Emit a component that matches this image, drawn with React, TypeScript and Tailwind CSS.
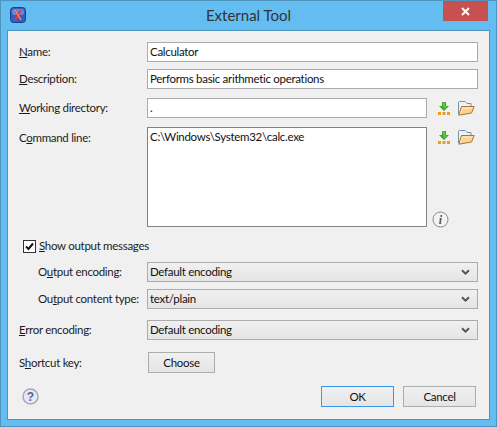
import { ReactNode } from "react";

const font = { fontFamily: 'Lato, "Noto Sans", sans-serif' };

const Label = ({ children, className = "w-[128px]" }: { children: ReactNode; className?: string }) => (
  <div className={`${className} shrink-0 whitespace-nowrap text-[11.5px] leading-[16px] tracking-[-0.3px] text-[#1c1c1c]`}>{children}</div>
);

const Field = ({ value, className = "" }: { value: string; className?: string }) => (
  <div className={`h-[20px] border border-[#ababab] bg-white pl-[2px] text-[11.5px] leading-[18px] tracking-[-0.3px] text-[#111] ${className}`}>
    {value}
  </div>
);

const Chevron = () => (
  <svg width="9" height="7" viewBox="0 0 9 7">
    <path d="M1 1.2 L4.5 4.7 L8 1.2" fill="none" stroke="#555" strokeWidth="2" />
  </svg>
);

const Select = ({ value }: { value: string }) => (
  <div className="flex h-[20px] flex-1 items-center justify-between border border-[#acacac] bg-gradient-to-b from-[#f0f0f0] to-[#e5e5e5] pl-[2px] pr-[7px] text-[11.5px] tracking-[-0.3px] text-[#111]">
    <span>{value}</span>
    <Chevron />
  </div>
);

const Download = () => (
  <svg width="12" height="13" viewBox="0 0 12 13" className="shrink-0">
    <path d="M4 0 H8 V4 H11 L6 9 L1 4 H4 Z" fill="#3fa52c" />
    <path d="M4.5 0.5 H7 V4.5 H9 L6 7 Z" fill="#63c94a" />
    <rect x="0" y="10" width="3" height="3" fill="#f09a1a" />
    <rect x="4.5" y="10" width="3" height="3" fill="#f09a1a" />
    <rect x="9" y="10" width="3" height="3" fill="#f09a1a" />
  </svg>
);

const Folder = () => (
  <svg width="17" height="15" viewBox="0 0 17 15" className="shrink-0">
    <path d="M0.5 13 V1.5 Q0.5 0.5 1.5 0.5 H7 L9 2.5 H13 V5" fill="#eef2f6" stroke="#7d8fa3" />
    <path d="M0.8 14.2 L3.5 5.5 H16.2 L13.5 12 Z" fill="#f8d48e" stroke="#a8743c" />
    <path d="M2.5 13 L4.5 7 H14.5" fill="none" stroke="#fdeecb" />
  </svg>
);

const Button = ({ children, className = "" }: { children: ReactNode; className?: string }) => (
  <div className={`flex items-center justify-center border bg-gradient-to-b from-[#f0f0f0] to-[#e5e5e5] text-[11.5px] tracking-[-0.3px] text-[#111] ${className}`}>
    {children}
  </div>
);

export default function App() {
  return (
    <div style={font} className="flex h-[427px] w-[497px] flex-col overflow-hidden border border-[#4e94bd] bg-[#63bdf0]">
      {/* Title bar */}
      <div className="relative flex h-[29px] shrink-0 items-center justify-center">
        <svg width="16" height="16" viewBox="0 0 16 16" className="absolute left-[9px] top-[6px]">
          <rect x="0.5" y="0.5" width="15" height="15" rx="3" fill="#2f5fc4" stroke="#1c3f8f" />
          <rect x="2" y="2" width="12" height="6" rx="2" fill="#5f8be0" />
          <path d="M5 3 L11 13 M11 3 L5 13" stroke="#f03a2a" strokeWidth="2" />
          <path d="M5 3 L11 13" stroke="#fbd5cf" strokeWidth="0.7" />
        </svg>
        <span className="text-[15px] text-[#333]">External Tool</span>
        <div className="absolute right-[8px] top-0 flex h-[20px] w-[45px] items-center justify-center bg-[#c75050]">
          <svg width="9" height="9" viewBox="0 0 9 9">
            <path d="M1 1 L8 8 M8 1 L1 8" stroke="#fff" strokeWidth="2" />
          </svg>
        </div>
      </div>

      {/* Client area */}
      <div className="mx-[6px] flex h-[390px] flex-col border border-[#4e94bd] bg-[#f0f0f0] px-[11px] pt-[11px]">
        <div className="flex items-center">
          <Label><u>N</u>ame:</Label>
          <Field value="Calculator" className="flex-1" />
        </div>
        <div className="mt-[7px] flex items-center">
          <Label><u>D</u>escription:</Label>
          <Field value="Performs basic arithmetic operations" className="flex-1" />
        </div>
        <div className="mt-[9px] flex items-center">
          <Label><u>W</u>orking directory:</Label>
          <Field value="." className="w-[280px]" />
          <div className="ml-[11px] flex items-center gap-[8px]">
            <Download />
            <Folder />
          </div>
        </div>
        <div className="mt-[9px] flex items-start">
          <Label className="w-[128px] pt-[3px]">C<u>o</u>mmand line:</Label>
          <div className="h-[100px] w-[280px] border border-[#82828c] bg-white pl-[2px] text-[11.5px] leading-[18px] tracking-[-0.3px] text-[#111]">
            C:\Windows\System32\calc.exe
          </div>
          <div className="flex h-[100px] flex-col justify-between">
            <div className="ml-[11px] mt-[3px] flex items-center gap-[8px]">
              <Download />
              <Folder />
            </div>
            <svg width="17" height="17" viewBox="0 0 17 17" className="-mb-[1px] ml-[5px]">
              <circle cx="8.5" cy="8.5" r="7.5" fill="#f4f4f4" stroke="#8a8a8a" />
              <text x="8.5" y="13" textAnchor="middle" fontFamily="Liberation Serif" fontStyle="italic" fontWeight="700" fontSize="12" fill="#555">i</text>
            </svg>
          </div>
        </div>

        <div className="mt-[11px] flex items-center pl-[4px]">
          <div className="flex h-[13px] w-[13px] items-center justify-center border border-[#333] bg-white">
            <svg width="11" height="11" viewBox="0 0 11 11">
              <path d="M2 5.5 L4.5 8 L9 2.5" fill="none" stroke="#111" strokeWidth="2" />
            </svg>
          </div>
          <Label className="ml-[3px]"><u>S</u>how output messages</Label>
        </div>

        <div className="mt-[8px] flex items-center">
          <Label className="w-[128px] pl-[19px]">O<u>u</u>tput encoding:</Label>
          <Select value="Default encoding" />
        </div>
        <div className="mt-[7px] flex items-center">
          <Label className="w-[128px] pl-[19px]">Ou<u>t</u>put content type:</Label>
          <Select value="text/plain" />
        </div>
        <div className="mt-[11px] flex items-center">
          <Label><u>E</u>rror encoding:</Label>
          <Select value="Default encoding" />
        </div>
        <div className="mt-[12px] flex items-center">
          <Label>S<u>h</u>ortcut key:</Label>
          <Button className="ml-[1px] h-[21px] w-[67px] border-[#adadad]">Choose</Button>
        </div>

        <div className="mt-[13px] flex items-center">
          <svg width="17" height="17" viewBox="0 0 17 17" className="ml-[3px]">
            <circle cx="8.5" cy="8.5" r="7.5" fill="#e6e8f2" stroke="#a9a9b5" strokeWidth="1.5" />
            <text x="8.5" y="13" textAnchor="middle" fontFamily="Liberation Sans" fontWeight="700" fontSize="12" fill="#51619c">?</text>
          </svg>
          <Button className="ml-auto h-[21px] w-[73px] border-[#3c97e8]">OK</Button>
          <Button className="ml-[9px] mr-[2px] h-[21px] w-[73px] border-[#adadad]">Cancel</Button>
        </div>
      </div>
    </div>
  );
}
